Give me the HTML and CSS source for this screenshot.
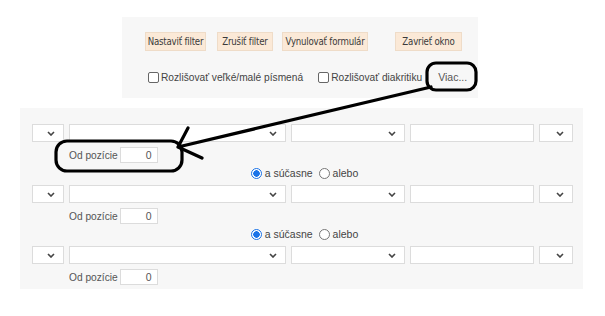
FILE: index.html
```html
<!DOCTYPE html>
<html lang="sk">
<head>
  <meta charset="UTF-8" />
  <title>Filter</title>
  <link rel="stylesheet" href="styles.css">
</head>
<body>

  <!-- Horny panel s tlacidlami -->
  <div class="filter-box">
    <div class="buttons">
      <button class="btn btn-set">Nastaviť filter</button>
      <button class="btn btn-cancel">Zrušiť filter</button>
      <button class="btn btn-reset">Vynulovať formulár</button>
      <button class="btn btn-close">Zavrieť okno</button>
    </div>
    <div class="options">
      <label class="check"><span class="box"></span>Rozlišovať veľké/malé písmená</label>
      <label class="check check-diac"><span class="box"></span>Rozlišovať diakritiku</label>
      <button class="more">Viac...</button>
    </div>
  </div>

  <!-- Podmienky -->
  <div class="conditions">
    <div class="row">
      <div class="sel s1"><svg class="chev" width="8" height="5" viewBox="0 0 8 5"><path d="M1 1 L4 4 L7 1" /></svg></div>
      <div class="sel s2"><svg class="chev" width="8" height="5" viewBox="0 0 8 5"><path d="M1 1 L4 4 L7 1" /></svg></div>
      <div class="sel s3"><svg class="chev" width="8" height="5" viewBox="0 0 8 5"><path d="M1 1 L4 4 L7 1" /></svg></div>
      <div class="txt"></div>
      <div class="sel s4"><svg class="chev" width="8" height="5" viewBox="0 0 8 5"><path d="M1 1 L4 4 L7 1" /></svg></div>
    </div>
    <div class="pos"><span>Od pozície</span><div class="num">0</div></div>
    <div class="conj">
      <span class="radio on"></span><span class="rlabel">a súčasne</span>
      <span class="radio"></span><span class="rlabel">alebo</span>
    </div>

    <div class="row">
      <div class="sel s1"><svg class="chev" width="8" height="5" viewBox="0 0 8 5"><path d="M1 1 L4 4 L7 1" /></svg></div>
      <div class="sel s2"><svg class="chev" width="8" height="5" viewBox="0 0 8 5"><path d="M1 1 L4 4 L7 1" /></svg></div>
      <div class="sel s3"><svg class="chev" width="8" height="5" viewBox="0 0 8 5"><path d="M1 1 L4 4 L7 1" /></svg></div>
      <div class="txt"></div>
      <div class="sel s4"><svg class="chev" width="8" height="5" viewBox="0 0 8 5"><path d="M1 1 L4 4 L7 1" /></svg></div>
    </div>
    <div class="pos"><span>Od pozície</span><div class="num">0</div></div>
    <div class="conj">
      <span class="radio on"></span><span class="rlabel">a súčasne</span>
      <span class="radio"></span><span class="rlabel">alebo</span>
    </div>

    <div class="row">
      <div class="sel s1"><svg class="chev" width="8" height="5" viewBox="0 0 8 5"><path d="M1 1 L4 4 L7 1" /></svg></div>
      <div class="sel s2"><svg class="chev" width="8" height="5" viewBox="0 0 8 5"><path d="M1 1 L4 4 L7 1" /></svg></div>
      <div class="sel s3"><svg class="chev" width="8" height="5" viewBox="0 0 8 5"><path d="M1 1 L4 4 L7 1" /></svg></div>
      <div class="txt"></div>
      <div class="sel s4"><svg class="chev" width="8" height="5" viewBox="0 0 8 5"><path d="M1 1 L4 4 L7 1" /></svg></div>
    </div>
    <div class="pos"><span>Od pozície</span><div class="num">0</div></div>
  </div>

  <!-- Anotacia: ramceky a sipka -->
  <svg class="marks" width="605" height="316" viewBox="0 0 605 316">
    <rect x="427" y="63" width="49" height="27" rx="9" />
    <rect x="56" y="141" width="126" height="30" rx="11" />
    <path d="M431 87 L178 147 M188 128 L178 147 L202 158" />
  </svg>

</body>
</html>
```

FILE: styles.css
```css
body {
  margin: 0;
  background: #fff;
  font-family: 'Liberation Sans', Arial, sans-serif;
  color: #444;
  position: relative;
  width: 605px;
  height: 316px;
  overflow: hidden;
}

/* Horny panel */
.filter-box {
  margin: 17px 0 0 122px;
  width: 356px;
  height: 81px;
  background: #f7f7f7;
  padding: 15px 0 0 23px;
  box-sizing: border-box;
}
.buttons {
  display: flex;
  height: 19px;
}
.btn {
  height: 19px;
  padding: 0;
  margin: 0;
  border: 1px solid #efdcc8;
  background: #fbe9d7;
  color: #3a3a3a;
  font-family: 'DejaVu Sans Condensed', 'Liberation Sans Narrow', 'Liberation Sans', sans-serif;
  font-size: 9.6px;
  letter-spacing: -0.2px;
  cursor: pointer;
}
.btn-set { width: 61px; }
.btn-cancel { width: 56px; margin-left: 11px; }
.btn-reset { width: 86px; margin-left: 9px; }
.btn-close { width: 67px; margin-left: 27px; }

.options {
  display: flex;
  align-items: center;
  height: 28px;
  margin-top: 12px;
  padding-left: 3px;
  font-size: 10.2px;
  color: #444;
}
.check {
  display: flex;
  align-items: center;
  white-space: nowrap;
}
.check-diac { margin-left: 15px; }
.box {
  display: inline-block;
  width: 11px;
  height: 11px;
  border: 1px solid #666;
  border-radius: 2px;
  background: #fff;
  margin-right: 2px;
  box-sizing: border-box;
}
.more {
  margin-left: 9px;
  height: 24px;
  width: 43px;
  padding: 0;
  border: none;
  background: #f7f7f7;
  color: #555;
  font-family: 'Liberation Sans', Arial, sans-serif;
  font-size: 10.5px;
}

/* Podmienky */
.conditions {
  margin: 10px 0 0 20px;
  width: 563px;
  height: 181px;
  background: #f7f7f7;
  padding: 16px 10px 0 12px;
  box-sizing: border-box;
  display: flex;
  flex-direction: column;
}
.row {
  display: flex;
  gap: 5px;
  height: 18px;
}
.sel, .txt, .num {
  background: #fff;
  border: 1px solid #dcdcdc;
  box-sizing: border-box;
}
.sel {
  display: flex;
  align-items: center;
  justify-content: flex-end;
  padding-right: 8px;
}
.s1 { width: 32px; }
.s2 { width: 217px; }
.s3 { width: 114px; }
.txt { width: 124px; }
.s4 { width: 34px; }
.chev path {
  fill: none;
  stroke: #444;
  stroke-width: 1.6;
}

.pos {
  display: flex;
  align-items: center;
  height: 16px;
  margin-top: 5px;
  padding-left: 37px;
  font-size: 10.2px;
  color: #555;
}
.num {
  width: 38px;
  height: 16px;
  margin-left: 2px;
  text-align: right;
  padding-right: 5px;
  font-size: 10.5px;
  line-height: 14px;
  color: #555;
}

.conj {
  display: flex;
  align-items: center;
  justify-content: center;
  height: 12px;
  margin: 4px 0 6px;
  padding-left: 10px;
  font-size: 10.5px;
  color: #444;
}
.radio {
  width: 11px;
  height: 11px;
  border-radius: 50%;
  border: 1px solid #777;
  box-sizing: border-box;
  background: #fff;
  margin-right: 3px;
}
.radio.on {
  border: 1.5px solid #1a73e8;
  background: radial-gradient(circle, #1a73e8 0 3px, #fff 3.5px);
}
.rlabel { margin-right: 6px; }

/* Anotacia */
.marks {
  position: absolute;
  top: 0;
  left: 0;
  pointer-events: none;
}
.marks rect, .marks path {
  fill: none;
  stroke: #000;
  stroke-width: 3.2;
  stroke-linecap: round;
  stroke-linejoin: round;
}
```
